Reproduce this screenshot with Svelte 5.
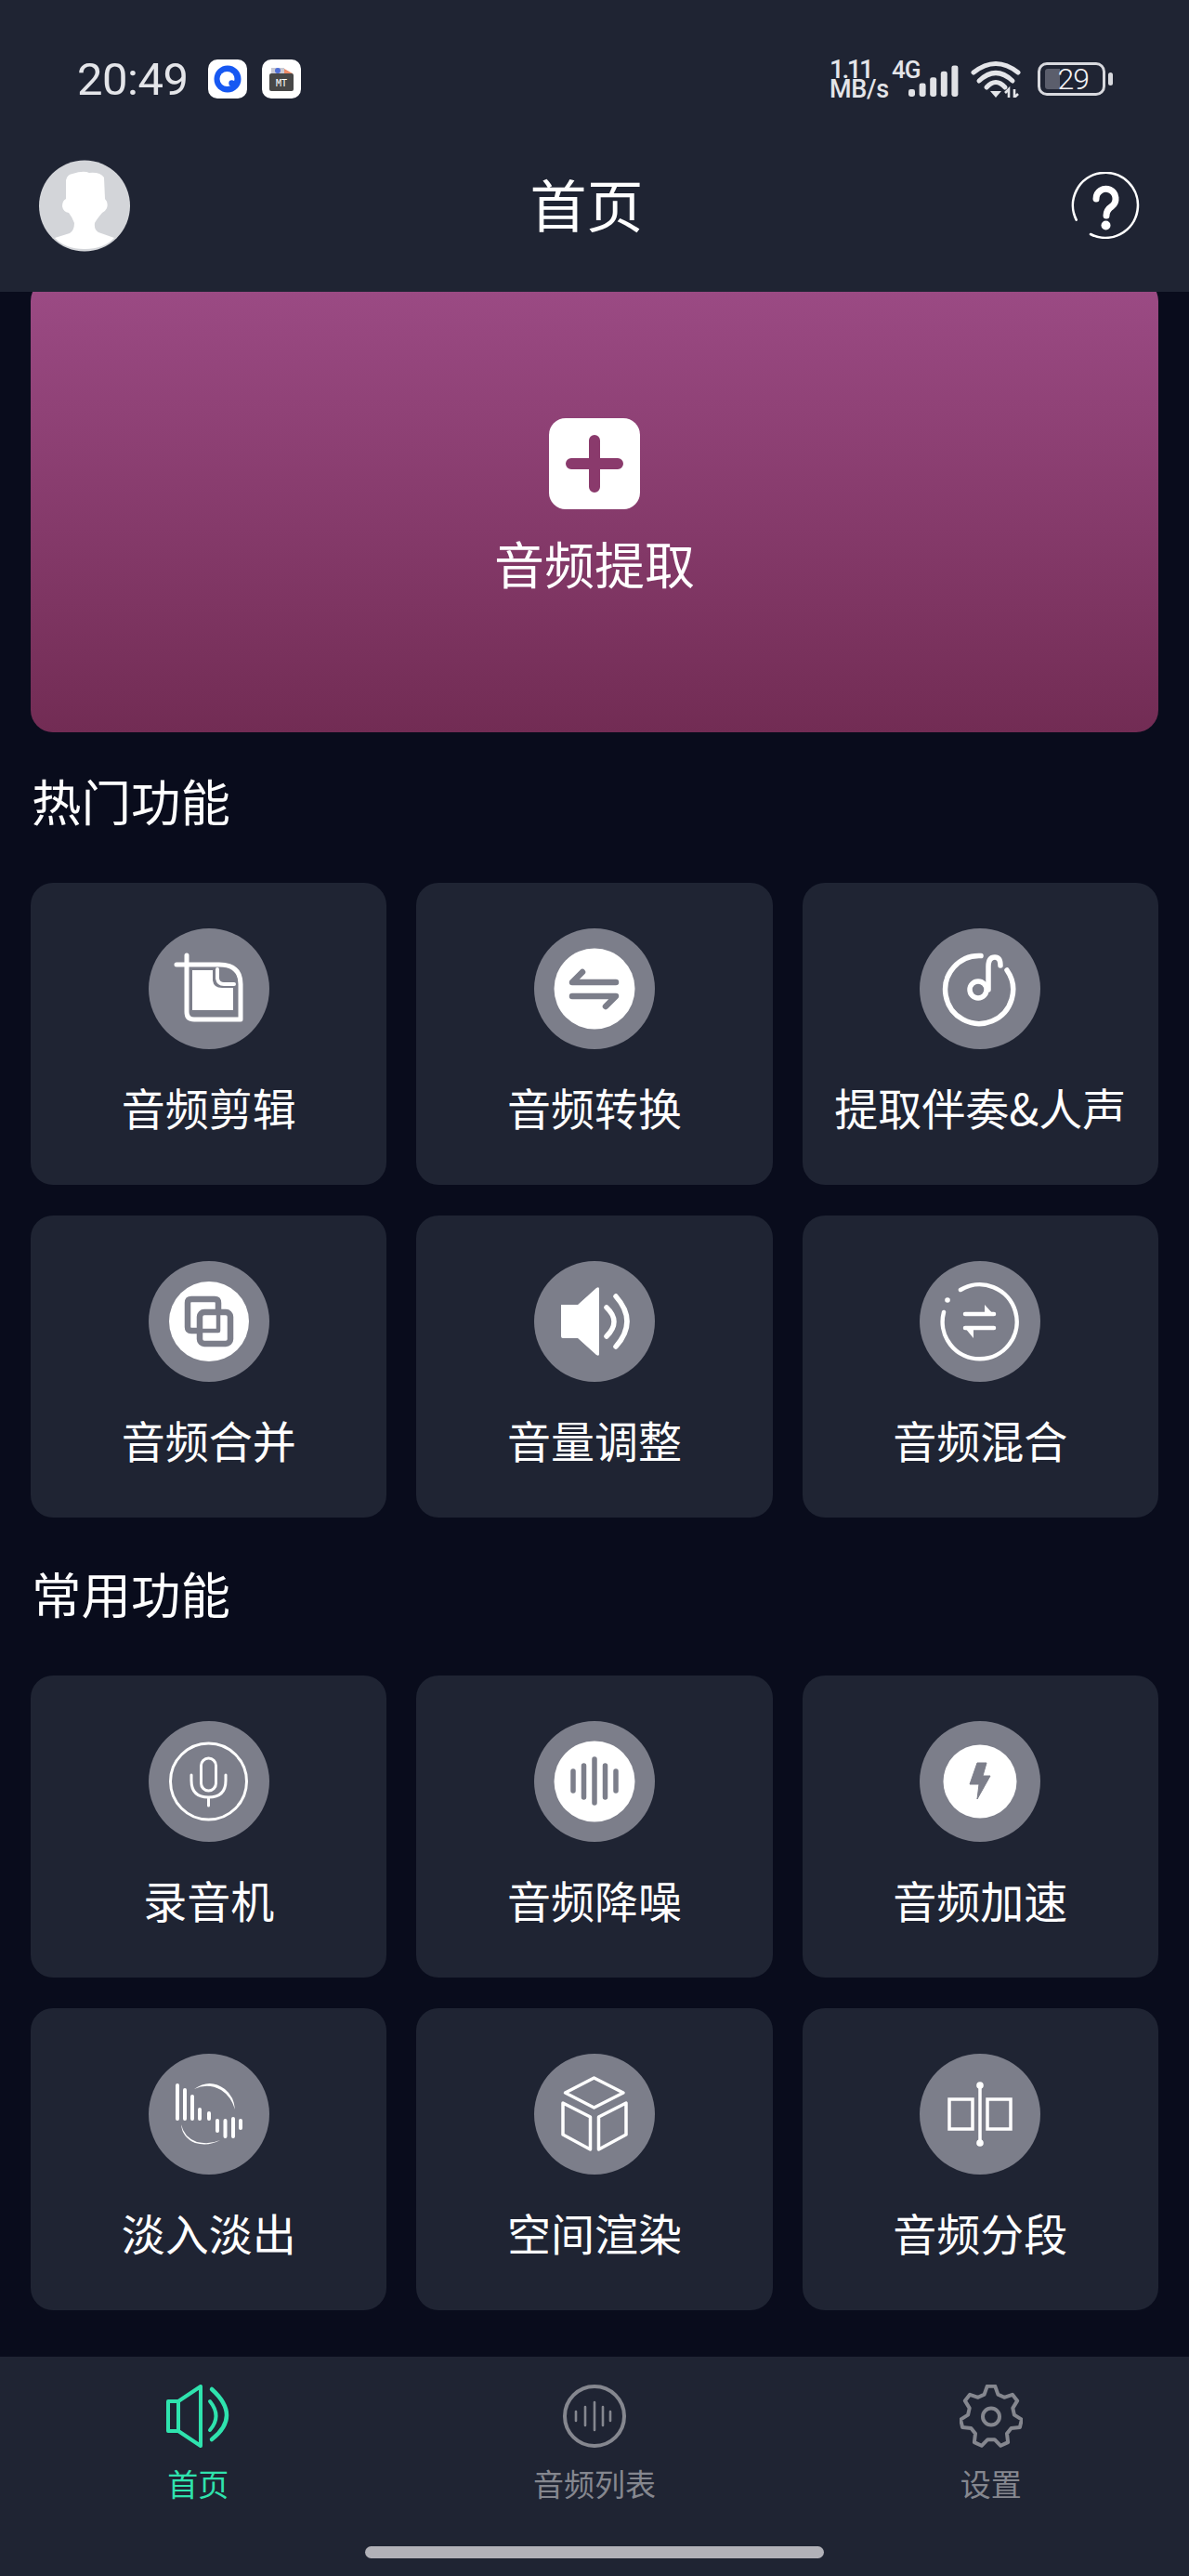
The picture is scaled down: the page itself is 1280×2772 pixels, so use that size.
<script>
  const hotTools = [
    { key: 'crop', label: '音频剪辑' },
    { key: 'convert', label: '音频转换' },
    { key: 'extract', label: '提取伴奏&人声' },
    { key: 'merge', label: '音频合并' },
    { key: 'volume', label: '音量调整' },
    { key: 'mix', label: '音频混合' }
  ];

  const commonTools = [
    { key: 'mic', label: '录音机' },
    { key: 'noise', label: '音频降噪' },
    { key: 'speed', label: '音频加速' },
    { key: 'fade', label: '淡入淡出' },
    { key: 'cube', label: '空间渲染' },
    { key: 'split', label: '音频分段' }
  ];

  const sections = [
    { title: '热门功能', tools: hotTools },
    { title: '常用功能', tools: commonTools }
  ];

  const signalBars = [0, 1, 2, 3, 4];

  // seven tooth outline for the settings tab
  function gearPath(cx, cy, outer, inner, teeth) {
    const pts = [];
    for (let i = 0; i < teeth; i++) {
      const a = -Math.PI / 2 + (i * 2 * Math.PI) / teeth;
      const offsets = [[-0.3, inner], [-0.13, outer], [0.13, outer], [0.3, inner]];
      for (const [d, r] of offsets) {
        pts.push(`${(cx + r * Math.cos(a + d)).toFixed(1)} ${(cy + r * Math.sin(a + d)).toFixed(1)}`);
      }
    }
    return 'M' + pts.join(' L') + ' Z';
  }
</script>

<div class="screen">
  <header class="top">
    <div class="status">
      <div class="status-left">
        <span class="time">20:49</span>
        <span class="notif">
          <svg viewBox="0 0 42 42" width="42" height="42">
            <circle cx="21" cy="21" r="14.5" fill="#1658f2" />
            <circle cx="20.5" cy="21" r="8" fill="#fff" />
            <circle cx="25.5" cy="25.5" r="3.2" fill="#1658f2" />
          </svg>
        </span>
        <span class="notif">
          <svg viewBox="0 0 42 42" width="42" height="42">
            <rect x="10" y="9" width="14" height="8" fill="#c9c9d2" />
            <circle cx="17" cy="12" r="3" fill="#4f6fd8" />
            <path d="M24 10 L33 15 V18 H24 Z" fill="#ee8a66" />
            <rect x="8" y="15" width="26" height="19" rx="2" fill="#474747" />
            <text x="21" y="29" text-anchor="middle" class="mt">MT</text>
          </svg>
        </span>
      </div>
      <div class="status-right">
        <div class="speed"><span class="speed-num">1.11</span><span class="speed-unit">MB/s</span></div>
        <div class="net">4G</div>
        <svg class="signal" viewBox="0 0 54 34" width="54" height="34">
          {#each signalBars as i}
            <rect x={i * 11.6} y={26 - i * 6.4} width="7" height={8 + i * 6.4} rx="2.4" fill="#e1e2e6" />
          {/each}
        </svg>
        <svg class="wifi" viewBox="0 0 54 40" width="54" height="40">
          <g fill="none" stroke="#e4e5e9" stroke-width="5" stroke-linecap="round">
            <path d="M3 13 Q27 -6 51 13" />
            <path d="M9 22 Q27 5 45 22" />
            <path d="M17 29 Q27 18 37 29" />
          </g>
          <path d="M21 33 H33 L27 40 Z" fill="#e4e5e9" />
          <path d="M41 40 V31 L37 35 M47 31 V40 L51 36" fill="none" stroke="#e4e5e9" stroke-width="2.6" />
        </svg>
        <div class="battery">
          <div class="battery-body">
            <span class="battery-fill"></span>
            <span class="battery-num">29</span>
          </div>
          <span class="battery-tip"></span>
        </div>
      </div>
    </div>

    <div class="toolbar">
      <svg class="avatar" viewBox="0 0 98 99" width="98" height="99">
        <circle cx="49" cy="49.5" r="49" fill="#d3d5d9" />
        <path d="M36 15 Q48 11 54 14 Q66 13 70 19 L71 42 Q75 46 73 52 Q71 56 68 57 Q62 64 60 68 Q59 75 64 78 L81 84 Q70 96 49 96 Q28 96 17 84 L33 79 Q38 76 38 68 Q36 62 32 57 Q26 56 25 50 Q25 44 29 42 L29 22 Q30 16 36 15 Z" fill="#fff" />
      </svg>
      <h1>首页</h1>
      <svg class="help" viewBox="0 0 74 72" width="74" height="72">
        <path d="M5.7 51.6 A35 35 0 1 1 21 67" fill="none" stroke="#fff" stroke-width="2.6" stroke-linecap="round" />
        <path d="M27 29 A10.5 10.5 0 1 1 44 37 Q38 41 38 47" fill="none" stroke="#fff" stroke-width="7" stroke-linecap="round" />
        <circle cx="37.5" cy="57.5" r="5" fill="#fff" />
      </svg>
    </div>
  </header>

  <main>
    <div class="banner">
      <div class="plus">
        <svg viewBox="0 0 98 98" width="98" height="98">
          <path d="M24 49 H74 M49 24 V74" stroke="#8a3a6c" stroke-width="12" stroke-linecap="round" />
        </svg>
      </div>
      <div class="banner-label">音频提取</div>
    </div>

    {#each sections as section}
      <h2>{section.title}</h2>
      <div class="grid">
        {#each section.tools as tool}
          <div class="card">
            <svg class="tool-icon" viewBox="0 0 130 130" width="130" height="130">
              <circle cx="65" cy="65" r="65" fill="#7c7e8a" />
              {#if tool.key === 'crop'}
                <g fill="none" stroke="#fff" stroke-width="5" stroke-linecap="round" stroke-linejoin="round">
                  <path d="M30 39 H76 Q99 39 99 60 V98 H49 Q41 98 41 90 V29" />
                  <path d="M74 44 V54 Q75 60 81 60 H92" stroke-width="4" />
                </g>
                <path d="M47 45 H69 V56 Q70 64 79 64 H91 V88 H47 Z" fill="#fff" />
              {:else if tool.key === 'convert'}
                <circle cx="65" cy="65" r="43.5" fill="#fff" />
                <g fill="none" stroke="#7c7e8a" stroke-width="6.5" stroke-linecap="round" stroke-linejoin="round">
                  <path d="M88 58 H41 L52 47" />
                  <path d="M41 73 H88 L77 84" />
                </g>
              {:else if tool.key === 'extract'}
                <g fill="none" stroke="#fff" stroke-width="5.5" stroke-linecap="round">
                  <path d="M66 29.5 A36.5 36.5 0 1 0 94 45" />
                  <circle cx="63" cy="66" r="9" />
                  <path d="M74 66 V41 Q74 31 81 31 Q87 31 87 40" />
                </g>
              {:else if tool.key === 'merge'}
                <circle cx="65" cy="65" r="43" fill="#fff" />
                <g fill="none" stroke="#7c7e8a" stroke-width="6.5" stroke-linejoin="round">
                  <path d="M52 75 H46 Q42 75 42 71 V45 Q42 41 46 41 H71 Q75 41 75 45 V52" />
                  <rect x="55" y="55" width="33" height="34" rx="5" />
                  <path d="M55 75 H75 V55" stroke-width="4.5" />
                </g>
              {:else if tool.key === 'volume'}
                <path d="M29 47 H47 L67 29 Q70 27 70 30 V100 Q70 103 67 101 L47 83 H31 Q29 83 29 81 Z" fill="#fff" />
                <g fill="none" stroke="#fff" stroke-width="5.5" stroke-linecap="round">
                  <path d="M78 50 Q94 65 78 81" />
                  <path d="M88 38 Q112 65 88 92" />
                </g>
              {:else if tool.key === 'mix'}
                <g fill="none" stroke="#fff" stroke-width="4.5" stroke-linecap="round">
                  <path d="M44 31 A40 40 0 1 1 26 55" />
                  <path d="M49 57 H80 M49 72 H80" />
                </g>
                <circle cx="30" cy="42" r="2.8" fill="#fff" />
                <path d="M70 47 L81 59 H70 Z M48 71 H58 V83 Z" fill="#fff" />
              {:else if tool.key === 'mic'}
                <g fill="none" stroke="#fff" stroke-width="3" stroke-linecap="round">
                  <circle cx="64.5" cy="65" r="41" />
                  <rect x="56.5" y="40" width="16" height="35" rx="8" />
                  <path d="M46 58 V64 Q46 82 64.5 82 Q83 82 83 64 V58 M64.5 82 V91" />
                </g>
              {:else if tool.key === 'noise'}
                <circle cx="65" cy="65" r="43.5" fill="#fff" />
                <g stroke="#7c7e8a" stroke-width="5.5" stroke-linecap="round">
                  <path d="M42 54 V75 M53.5 48 V82 M65 41 V88 M76.5 48 V82 M88 54 V75" />
                </g>
              {:else if tool.key === 'speed'}
                <circle cx="65" cy="65" r="39.5" fill="#fff" />
                <path d="M62 45 H72 L68 59 H76 L62 84 L64 68 H54 Z" fill="#7c7e8a" stroke="#7c7e8a" stroke-width="1" stroke-linejoin="round" />
              {:else if tool.key === 'fade'}
                <g stroke="#fff" stroke-width="4" stroke-linecap="round">
                  <path d="M31 34 V70 M39 39 V70 M47 46 V70 M55 60 V70 M65 64 V70 M74 72 V83 M82.5 72 V89 M91 70 V89 M99 72 V80" />
                </g>
                <path d="M49 38 Q66 26 82 38 Q92 46 93 60 Q89 46 78 39 Q64 31 49 38 Z" fill="#fff" />
                <path d="M35 76 Q38 90 52 95 Q66 98 77 93 Q64 100 50 96 Q36 90 35 76 Z" fill="#fff" />
              {:else if tool.key === 'cube'}
                <g fill="none" stroke="#fff" stroke-width="3.5" stroke-linejoin="round">
                  <path d="M64.5 26 L96 42 L64.5 58 L33.5 42 Z" />
                  <path d="M31 53 L60.5 68 V103 L31 87 Z" />
                  <path d="M69.5 68 L99 53 V87 L69.5 103 Z" />
                </g>
              {:else if tool.key === 'split'}
                <g fill="none" stroke="#fff" stroke-width="3.5">
                  <rect x="32" y="49" width="25" height="32" />
                  <rect x="73" y="49" width="25" height="32" />
                  <path d="M65 34 V96" />
                </g>
                <circle cx="65" cy="34" r="3.8" fill="#fff" />
                <circle cx="65" cy="96" r="3.8" fill="#fff" />
              {/if}
            </svg>
            <div class="tool-label">{tool.label}</div>
          </div>
        {/each}
      </div>
    {/each}
  </main>

  <nav>
    <div class="tabs">
      <div class="tab active">
        <svg viewBox="0 0 68 68" width="68" height="68">
          <g fill="none" stroke="#2fe3ae" stroke-width="4" stroke-linejoin="round" stroke-linecap="round">
            <path d="M2 18 H13 V50 H2 Z" />
            <path d="M13 18 L37 2 V66 L13 50" />
            <path d="M49 5 Q81 34 49 59" stroke-width="4.5" />
            <path d="M47 18 Q60 34 47 49" />
          </g>
        </svg>
        <span>首页</span>
      </div>
      <div class="tab">
        <svg viewBox="0 0 68 68" width="68" height="68">
          <circle cx="34" cy="34" r="32" fill="none" stroke="#85878f" stroke-width="4" />
          <path d="M14 29 V39 M24 24 V44 M34 19 V49 M43 24 V44 M51 29 V39" stroke="#85878f" stroke-width="2.6" stroke-linecap="round" />
        </svg>
        <span>音频列表</span>
      </div>
      <div class="tab">
        <svg viewBox="0 0 68 68" width="68" height="68">
          <path d={gearPath(34, 34.5, 33, 25, 7)} fill="none" stroke="#85878f" stroke-width="4" stroke-linejoin="round" />
          <circle cx="34" cy="34.5" r="9" fill="none" stroke="#85878f" stroke-width="4" />
        </svg>
        <span>设置</span>
      </div>
    </div>
    <div class="home-bar"></div>
  </nav>
</div>

<style>
  :global(body) {
    margin: 0;
    background: #090c1c;
  }

  .screen {
    width: 1280px;
    height: 2772px;
    display: flex;
    flex-direction: column;
    overflow: hidden;
    background: #090c1c;
    color: #fff;
    font-family: "Noto Sans CJK SC", "Noto Sans", sans-serif;
  }

  .top {
    background: #1f2433;
    flex: none;
  }

  .status {
    height: 128px;
    padding: 42px 82px 0 83px;
    box-sizing: border-box;
    display: flex;
    align-items: center;
    justify-content: space-between;
    color: #e4e5e9;
    font-family: Roboto, "Noto Sans", sans-serif;
  }

  .status-left {
    display: flex;
    align-items: center;
  }

  .time {
    font-size: 49px;
    width: 141px;
    letter-spacing: -0.5px;
  }

  .notif {
    width: 42px;
    height: 42px;
    margin-right: 16px;
    border-radius: 10px;
    background: #fff;
    display: block;
  }

  .notif svg {
    display: block;
  }

  .mt {
    font-family: "DejaVu Sans Mono", monospace;
    font-size: 10px;
    fill: #fff;
  }

  .status-right {
    display: flex;
    align-items: center;
  }

  .speed {
    display: flex;
    flex-direction: column;
    width: 67px;
    font-weight: 500;
  }

  .speed-num {
    display: block;
    height: 23px;
    font-size: 28px;
    line-height: 23px;
    letter-spacing: -2.5px;
  }

  .speed-unit {
    display: block;
    height: 21px;
    font-size: 27px;
    line-height: 21px;
    letter-spacing: -0.3px;
  }

  .net {
    font-size: 26px;
    font-weight: 500;
    line-height: 24px;
    letter-spacing: -1px;
    margin-bottom: 20px;
    width: 18px;
    white-space: nowrap;
  }

  .signal {
    margin-top: 4px;
  }

  .wifi {
    margin-left: 13px;
  }

  .battery {
    display: flex;
    align-items: center;
    margin-left: 18px;
  }

  .battery-body {
    position: relative;
    width: 73px;
    height: 36px;
    box-sizing: border-box;
    border: 3px solid #d8d9de;
    border-radius: 10px;
    display: flex;
    align-items: center;
    justify-content: flex-end;
    padding-right: 15px;
  }

  .battery-fill {
    position: absolute;
    left: 5px;
    top: 4px;
    bottom: 4px;
    width: 16px;
    border-radius: 3px 0 0 3px;
    background: #5b5e6c;
  }

  .battery-num {
    position: relative;
    font-size: 32px;
    font-weight: 300;
    line-height: 30px;
    letter-spacing: -1px;
    color: #f4f4f6;
  }

  .battery-tip {
    width: 5px;
    height: 14px;
    margin-left: 3px;
    border-radius: 3px;
    background: #d8d9de;
  }

  .toolbar {
    height: 186px;
    padding: 0 53px 0 42px;
    display: grid;
    grid-template-columns: 1fr auto 1fr;
    align-items: center;
  }

  .help {
    justify-self: end;
  }

  h1 {
    margin: 0 6px 4px 0;
    font-size: 61px;
    font-weight: 400;
    line-height: 80px;
  }

  main {
    flex: 1;
    min-height: 0;
    overflow: hidden;
    padding: 0 33px;
  }

  .banner {
    margin-top: -14px;
    height: 488px;
    box-sizing: border-box;
    padding-top: 150px;
    border-radius: 24px;
    background: linear-gradient(180deg, #9c4b85 0%, #722c54 100%);
    display: flex;
    flex-direction: column;
    align-items: center;
  }

  .plus {
    width: 98px;
    height: 98px;
    border-radius: 18px;
    background: #fff;
  }

  .plus svg {
    display: block;
  }

  .banner-label {
    margin-top: 28px;
    font-size: 54px;
    line-height: 60px;
  }

  h2 {
    margin: 41px 0 57px 1px;
    font-size: 53.5px;
    font-weight: 400;
    line-height: 64px;
  }

  .grid + h2 {
    margin-top: 49px;
  }

  .grid {
    display: grid;
    grid-template-columns: repeat(3, 1fr);
    column-gap: 32px;
    row-gap: 33px;
  }

  .card {
    height: 325px;
    box-sizing: border-box;
    padding-top: 49px;
    border-radius: 24px;
    background: #1f2433;
    display: flex;
    flex-direction: column;
    align-items: center;
  }

  .tool-icon {
    display: block;
    flex: none;
  }

  .tool-label {
    margin-top: 32px;
    font-size: 47px;
    line-height: 60px;
    white-space: nowrap;
  }

  nav {
    flex: none;
    height: 236px;
    background: #1f2433;
    display: flex;
    flex-direction: column;
    align-items: center;
  }

  .tabs {
    width: 100%;
    display: grid;
    grid-template-columns: repeat(3, 1fr);
    padding-top: 30px;
  }

  .tab {
    display: flex;
    flex-direction: column;
    align-items: center;
    color: #85878f;
    font-size: 33px;
    line-height: 40px;
  }

  .tab svg {
    display: block;
    margin-bottom: 18px;
  }

  .tab.active {
    color: #2fe3ae;
  }

  .home-bar {
    width: 494px;
    height: 13px;
    margin-top: 48px;
    border-radius: 7px;
    background: #b1b1b8;
  }
</style>
